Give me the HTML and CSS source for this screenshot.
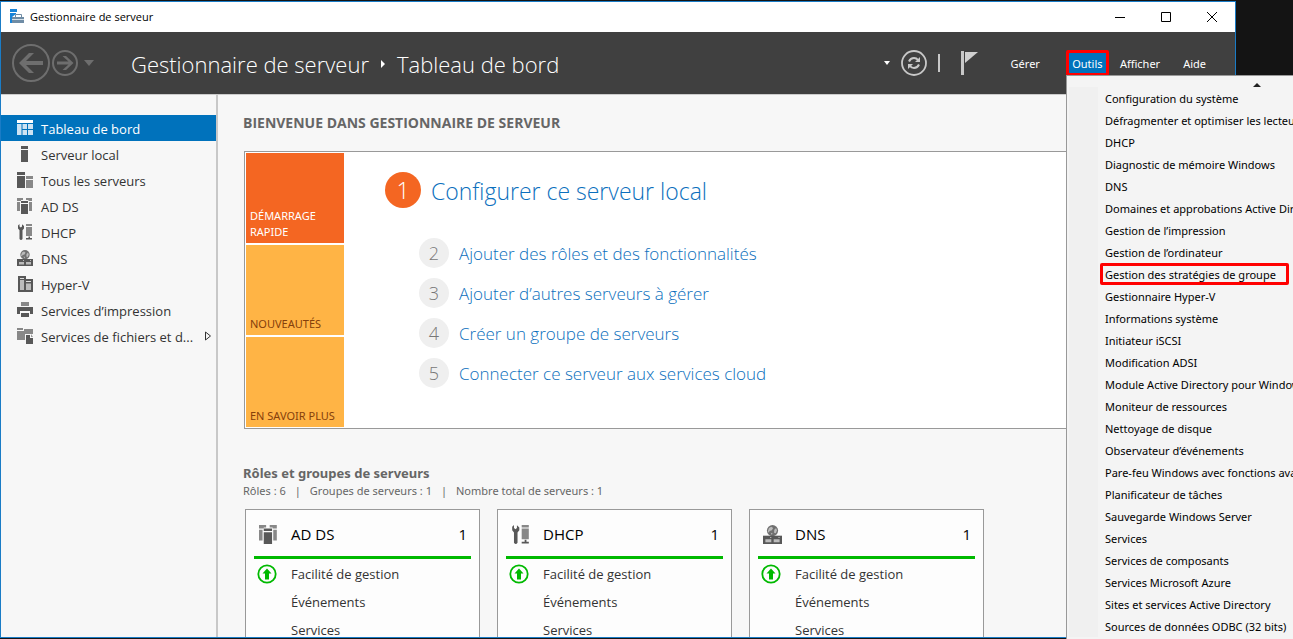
FILE: index.html
```html
<!DOCTYPE html>
<html lang="fr">
<head>
<meta charset="utf-8">
<title>Gestionnaire de serveur</title>
<link rel="stylesheet" href="styles.css">
</head>
<body>
<svg class="defs" aria-hidden="true">
  <symbol id="i-dash" viewBox="0 0 16 16"><path fill="#fff" d="M0 0h16v3H0z"/><path fill="#cde3f3" d="M0 4h4.500v11H0zM5.500 4h4.500v5H5.500zM11 4h5v5h-5zM5.500 10h4.500v5H5.500zM11 10h5v5h-5z"/></symbol>
  <symbol id="i-local" viewBox="0 0 16 16"><path fill="#585858" d="M4 0h7v3H4zM4 4h7v12H4z"/></symbol>
  <symbol id="i-all" viewBox="0 0 16 16"><path fill="#585858" d="M0 0h8v3H0zM0 4h8v12H0z"/><path fill="#888" d="M9 4h7v3H9zM9 8h7v8H9z"/></symbol>
  <symbol id="i-ad" viewBox="0 0 16 16"><path fill="#888" d="M0 0h6v2H4v1H0zM9 0h6v3h-3.500V2H9zM0 4h3v9H0zM12 4h3v9h-3z"/><path fill="#585858" d="M4 3h7v2H4zM4 6h7v10H4z"/></symbol>
  <symbol id="i-dhcp" viewBox="0 0 16 16"><path fill="#585858" d="M2.500 0v2.500l1.300 1L5 2.500 5 .3 7 2v2.500L5.500 6.300V15q-1.500 2-3 0V6.300L1 4.500V1.500z"/><path fill="#888" d="M9 0h6v2H9zM9 3h6v9H9z"/><path fill="#585858" d="M11.500 12.500h1.500V14h2v1.500H9V14h2.500z"/></symbol>
  <symbol id="i-dns" viewBox="0 0 16 16"><circle cx="8" cy="4.700" r="4.700" fill="#707070"/><path fill="#bbb" d="M5 2.500l2-1 1.500 1-1 2-2 .5-.5 1.500-1-1zM9.500 4l1.500-1.500.8 2-1 2.500-1.500-.5zM6.500 6.500l1.500.5-.5 1.500z"/><path fill="#585858" d="M0 9h16v7H0z"/><path fill="#bbb" d="M2 12h5v2.500H2zM9 12h5v2.500H9zM6 10h1v1H6zM13 10h1v1h-1z"/></symbol>
  <symbol id="i-hyper" viewBox="0 0 16 16"><path fill="#585858" d="M1 0h8v3h7v13H1z"/><path fill="#bbb" d="M3 4h4v10H3zM9 7.500h5V14H9z"/><path fill="#ddd" d="M3 2h4v1H3zM9 5h5v1H9z"/></symbol>
  <symbol id="i-print" viewBox="0 0 16 16"><path fill="#888" d="M4 0h8v4H4z"/><path fill="#585858" d="M0 5h16v7h-3V9H3v3H0zM4 11h8v4H4z"/></symbol>
  <symbol id="i-files" viewBox="0 0 16 16"><path fill="#888" d="M0 0h6v2H0zM7 1h9v2H7zM0 3h16v3H8v6H0z"/><path fill="#585858" d="M9 7h4v3h3v6H9z"/><path fill="#999" d="M14 6l2 3h-2z"/></symbol>
  <symbol id="i-up" viewBox="0 0 20 20"><circle cx="10" cy="10" r="8.700" fill="none" stroke="#00b900" stroke-width="1.800"/><path fill="#00b900" d="M10 4.500l4.500 5H12v6H8v-6H5.500z"/></symbol>
</svg>

<div class="screen">
<div class="window">
  <div class="titlebar">
    <svg class="app-icon" viewBox="0 0 16 16"><path fill="#1883d7" d="M0 0h7v3H0zM0 4h6v1L2 8v6H0z"/><path fill="#6f8ca5" d="M5 8V6q0-1 1-1h5q1 0 1 1v2h2v6H2V8h3zm1 0h5V6H6z"/><path stroke="#d5e0e8" d="M2 10.500h12"/></svg>
    <span class="title">Gestionnaire de serveur</span>
    <button class="winbtn" aria-label="Réduire"><svg viewBox="0 0 12 12"><path d="M1 6.500h10"/></svg></button>
    <button class="winbtn" aria-label="Agrandir"><svg viewBox="0 0 12 12"><path d="M1.500 1.500h9v9h-9z"/></svg></button>
    <button class="winbtn" aria-label="Fermer"><svg viewBox="0 0 12 12"><path d="M1 1l10 10M11 1L1 11"/></svg></button>
  </div>

  <header class="toolbar">
    <button class="plain" aria-label="Précédent"><svg class="nav-back" viewBox="0 0 38 38"><circle cx="19" cy="19" r="18" fill="none" stroke="#6e6e6e" stroke-width="2"/><path fill="#6e6e6e" d="M7 19L17 9h5l-8 8h17v4H14l8 8h-5z"/></svg></button>
    <button class="plain" aria-label="Suivant"><svg class="nav-next" viewBox="0 0 26 26"><circle cx="13" cy="13" r="12" fill="none" stroke="#6e6e6e" stroke-width="2"/><path fill="#6e6e6e" d="M21.500 13L14 20h-3.500l6-5.500H5v-3h11.500l-6-5.500H14z"/></svg></button>
    <button class="plain" aria-label="Historique"><svg class="nav-drop" viewBox="0 0 12 6"><path fill="#6e6e6e" d="M1 0h10L6 6z"/></svg></button>
    <h1 class="crumbs"><span>Gestionnaire de serveur</span><svg class="crumb-sep" viewBox="0 0 6 8"><path fill="#fff" d="M1 0l4 4-4 4z"/></svg><span>Tableau de bord</span></h1>
    <button class="plain" aria-label="Options"><svg class="tool-drop" viewBox="0 0 8 4"><path fill="#fff" d="M1 0h6L4 4z"/></svg></button>
    <button class="plain" aria-label="Actualiser"><svg class="refresh" viewBox="0 0 26 26"><circle cx="13" cy="13" r="12" fill="none" stroke="#c8c8c8" stroke-width="1.800"/><path fill="none" stroke="#c8c8c8" stroke-width="2" d="M8 11.500q1.500-3.500 5-3.500 2.500 0 4 2M18 14.500q-1.500 3.500-5 3.500-2.500 0-4-2"/><path fill="#c8c8c8" d="M19 7v5h-5zM7 19v-5h5z"/></svg></button>
    <span class="bar"></span>
    <button class="plain" aria-label="Notifications"><svg class="flag" viewBox="0 0 18 24"><path fill="#c8c8c8" d="M1 0h3v24H1z"/><path fill="#d0d0d0" d="M5 1h13L5 12z"/></svg></button>
    <nav class="menus">
      <button class="menu">Gérer</button>
      <button class="menu active">Outils</button>
      <button class="menu">Afficher</button>
      <button class="menu">Aide</button>
    </nav>
  </header>

  <div class="body">
    <nav class="sidebar">
      <a class="side selected" href="#"><svg><use href="#i-dash"/></svg><span>Tableau de bord</span></a>
      <a class="side" href="#"><svg><use href="#i-local"/></svg><span>Serveur local</span></a>
      <a class="side" href="#"><svg><use href="#i-all"/></svg><span>Tous les serveurs</span></a>
      <a class="side" href="#"><svg><use href="#i-ad"/></svg><span>AD DS</span></a>
      <a class="side" href="#"><svg><use href="#i-dhcp"/></svg><span>DHCP</span></a>
      <a class="side" href="#"><svg><use href="#i-dns"/></svg><span>DNS</span></a>
      <a class="side" href="#"><svg><use href="#i-hyper"/></svg><span>Hyper-V</span></a>
      <a class="side" href="#"><svg><use href="#i-print"/></svg><span>Services d’impression</span></a>
      <a class="side" href="#"><svg><use href="#i-files"/></svg><span>Services de fichiers et d...</span><svg class="expand" viewBox="0 0 8 10"><path fill="none" stroke="#333" d="M1.500 1v8L6.500 5z"/></svg></a>
    </nav>

    <main class="content">
      <h2 class="welcome">BIENVENUE DANS GESTIONNAIRE DE SERVEUR</h2>
      <section class="panel">
        <div class="tiles">
          <button class="tile hot">DÉMARRAGE RAPIDE</button>
          <button class="tile">NOUVEAUTÉS</button>
          <button class="tile">EN SAVOIR PLUS</button>
        </div>
        <div class="steps">
          <a class="step first" href="#"><span class="num">1</span><span class="label">Configurer ce serveur local</span></a>
          <a class="step" href="#"><span class="num">2</span><span>Ajouter des rôles et des fonctionnalités</span></a>
          <a class="step" href="#"><span class="num">3</span><span>Ajouter d’autres serveurs à gérer</span></a>
          <a class="step" href="#"><span class="num">4</span><span>Créer un groupe de serveurs</span></a>
          <a class="step" href="#"><span class="num">5</span><span>Connecter ce serveur aux services cloud</span></a>
        </div>
      </section>

      <h2 class="roles">Rôles et groupes de serveurs</h2>
      <p class="counts"><span>Rôles : 6</span><span>|</span><span>Groupes de serveurs : 1</span><span>|</span><span>Nombre total de serveurs : 1</span></p>
      <div class="cards">
        <article class="card">
          <h3 class="card-head"><svg><use href="#i-ad"/></svg><span class="name">AD DS</span><span>1</span></h3>
          <a class="row" href="#"><svg><use href="#i-up"/></svg><span>Facilité de gestion</span></a>
          <a class="row" href="#"><span>Événements</span></a>
          <a class="row" href="#"><span>Services</span></a>
        </article>
        <article class="card">
          <h3 class="card-head"><svg><use href="#i-dhcp"/></svg><span class="name">DHCP</span><span>1</span></h3>
          <a class="row" href="#"><svg><use href="#i-up"/></svg><span>Facilité de gestion</span></a>
          <a class="row" href="#"><span>Événements</span></a>
          <a class="row" href="#"><span>Services</span></a>
        </article>
        <article class="card">
          <h3 class="card-head"><svg><use href="#i-dns"/></svg><span class="name">DNS</span><span>1</span></h3>
          <a class="row" href="#"><svg><use href="#i-up"/></svg><span>Facilité de gestion</span></a>
          <a class="row" href="#"><span>Événements</span></a>
          <a class="row" href="#"><span>Services</span></a>
        </article>
      </div>
    </main>
  </div>
</div>

<div class="dropdown" role="menu">
  <button class="scroll-up" aria-label="Défiler vers le haut"><svg viewBox="0 0 8 4"><path fill="#222" d="M4 0l4 4H0z"/></svg></button>
  <div class="items">
    <button role="menuitem">Configuration du système</button>
    <button role="menuitem">Défragmenter et optimiser les lecteurs</button>
    <button role="menuitem">DHCP</button>
    <button role="menuitem">Diagnostic de mémoire Windows</button>
    <button role="menuitem">DNS</button>
    <button role="menuitem">Domaines et approbations Active Directory</button>
    <button role="menuitem">Gestion de l’impression</button>
    <button role="menuitem">Gestion de l’ordinateur</button>
    <button role="menuitem" class="marked">Gestion des stratégies de groupe</button>
    <button role="menuitem">Gestionnaire Hyper-V</button>
    <button role="menuitem">Informations système</button>
    <button role="menuitem">Initiateur iSCSI</button>
    <button role="menuitem">Modification ADSI</button>
    <button role="menuitem">Module Active Directory pour Windows PowerShell</button>
    <button role="menuitem">Moniteur de ressources</button>
    <button role="menuitem">Nettoyage de disque</button>
    <button role="menuitem">Observateur d’événements</button>
    <button role="menuitem">Pare-feu Windows avec fonctions avancées</button>
    <button role="menuitem">Planificateur de tâches</button>
    <button role="menuitem">Sauvegarde Windows Server</button>
    <button role="menuitem">Services</button>
    <button role="menuitem">Services de composants</button>
    <button role="menuitem">Services Microsoft Azure</button>
    <button role="menuitem">Sites et services Active Directory</button>
    <button role="menuitem">Sources de données ODBC (32 bits)</button>
  </div>
</div>
</div>
</body>
</html>
```
FILE: styles.css
```css
* { box-sizing: border-box; }
body {
  margin: 0;
  background: #141414;
  font-family: "Open Sans", "Noto Sans", sans-serif;
  font-size: 13px;
  color: #333;
}
button { font: inherit; color: inherit; background: none; border: 0; padding: 0; margin: 0; text-align: left; }
a { color: inherit; text-decoration: none; }
h1, h2, h3, p { margin: 0; font-weight: 400; }
svg { display: block; flex: none; }
.defs { position: absolute; width: 0; height: 0; }

.screen { position: relative; height: 100vh; overflow: hidden; padding: 1px 57px 1px 0; }
.window {
  height: 100%;
  display: flex;
  flex-direction: column;
  overflow: hidden;
  border: 1px solid #1a7cc6;
  background: #f7f7f7;
}

.titlebar { flex: none; height: 30px; display: flex; align-items: center; background: #fff; color: #000; font-size: 11px; padding-left: 9px; }
.app-icon { width: 16px; height: 16px; margin-right: 4px; }
.title { flex: 1; padding-bottom: 2px; }
.winbtn { width: 46px; height: 30px; display: flex; align-items: center; justify-content: center; }
.winbtn svg { width: 12px; height: 12px; fill: none; stroke: #000; }

.toolbar { flex: none; height: 62px; display: flex; align-items: center; background: #404040; color: #fff; padding-left: 11px; }
.plain { flex: none; }
.nav-back { width: 38px; height: 38px; }
.nav-next { width: 26px; height: 26px; margin-left: 2px; }
.nav-drop { width: 12px; height: 6px; margin-left: 5px; }
.crumbs { flex: 1; display: flex; align-items: center; margin-left: 36px; padding-top: 2px; font-size: 22px; font-weight: 300; white-space: nowrap; }
.crumb-sep { width: 6px; height: 8px; margin: 0 11px; }
.tool-drop { width: 8px; height: 4px; }
.refresh { width: 26px; height: 26px; margin-left: 10px; }
.bar { width: 2px; height: 18px; margin: 0 20px 0 11px; background: #c8c8c8; }
.flag { width: 18px; height: 24px; }
.menus { display: flex; margin-left: 28px; padding-right: 24px; font-family: "Noto Sans", sans-serif; font-size: 11px; }
.menu { height: 26px; padding: 0 5px; margin-right: 13px; white-space: nowrap; }
.menu:last-child { margin-right: 0; }
.menu:first-child { margin-right: 21px; }
.menu.active { background: #0072bc; border: 3px solid #f00; border-radius: 2px; width: 43px; padding: 0; margin-right: 6px; text-align: center; }

.body { flex: 1; min-height: 0; display: flex; border-top: 1px solid #ccc; }
.sidebar { flex: none; width: 217px; padding-top: 20px; border-right: 2px solid #c8c8c8; }
.side { height: 26px; display: flex; align-items: center; padding-left: 16px; white-space: nowrap; }
.side span { padding-top: 2px; }
.side svg { width: 16px; height: 16px; margin-right: 8px; }
.side.selected { background: #0072bc; color: #fff; }
.side .expand { width: 8px; height: 10px; margin: 0 4px 0 auto; }

.content { flex: 1; min-width: 0; padding: 18px 0 0 25px; }
.welcome { font-size: 14px; line-height: 20px; font-weight: 700; color: #666; }
.panel { display: flex; margin: 18px 0 0 1px; padding: 1px; background: #fff; border: 1px solid #999; }
.tiles { flex: none; width: 98px; display: flex; flex-direction: column; gap: 2px; }
.tile { height: 90px; display: flex; align-items: flex-end; padding: 0 4px 3px; background: #ffb445; color: #85400b; font-family: "Noto Sans", sans-serif; font-size: 11px; line-height: 16px; }
.tile.hot { background: #f46622; color: #fff; }
.steps { padding: 18px 0 0 75px; font-weight: 300; color: #0b6fbd; }
.step { height: 40px; display: flex; align-items: center; font-size: 17px; }
.num { width: 30px; height: 30px; margin-right: 10px; border-radius: 50%; background: #efefef; color: #777; font-size: 18px; text-align: center; line-height: 30px; }
.first { height: 38px; margin: 0 0 24px -34px; font-size: 23px; }
.first .num { width: 36px; height: 36px; font-size: 23px; line-height: 36px; background: #f46622; color: #fff; }
.label { padding-top: 2px; }

.roles { margin-top: 35px; font-family: "Noto Sans", sans-serif; font-size: 13px; line-height: 18px; font-weight: 700; color: #666; }
.counts { display: flex; gap: 9px; font-family: "Noto Sans", sans-serif; font-size: 11px; line-height: 18px; color: #666; }
.cards { display: flex; gap: 17px; margin: 9px 0 0 2px; }
.card { width: 235px; height: 200px; flex: none; padding: 0 8px; border: 1px solid #999; background: #fdfdfd; }
.card-head { display: flex; align-items: center; height: 49px; padding: 2px 4px 0 5px; border-bottom: 3px solid #00b900; color: #000; font-size: 15px; }
.card-head svg { width: 19px; height: 19px; margin-right: 13px; }
.name { flex: 1; }
.row { display: flex; align-items: center; height: 28px; padding-left: 37px; }
.row svg { width: 20px; height: 20px; margin: 0 14px 0 -34px; }
.card-head + .row { margin-top: 1px; }

.dropdown { position: absolute; top: 75px; left: 1066px; right: 0; bottom: 0; overflow: hidden; background: #f4f4f4; border: solid #999; border-width: 1px 0 0 1px; color: #000; font-family: "Noto Sans", sans-serif; font-size: 11px; }
.scroll-up { display: block; width: 100%; height: 11px; padding: 7px 0 0 186px; }
.scroll-up svg { width: 8px; height: 4px; }
.items { margin-left: 2px; border-left: 29px solid #f0f0f0; }
.items button { display: block; height: 22px; padding: 0 5px; margin-left: 2px; white-space: nowrap; }
.items .marked { border: 3px solid #f00; border-radius: 2px; padding: 0 10px 0 2px; }
```
